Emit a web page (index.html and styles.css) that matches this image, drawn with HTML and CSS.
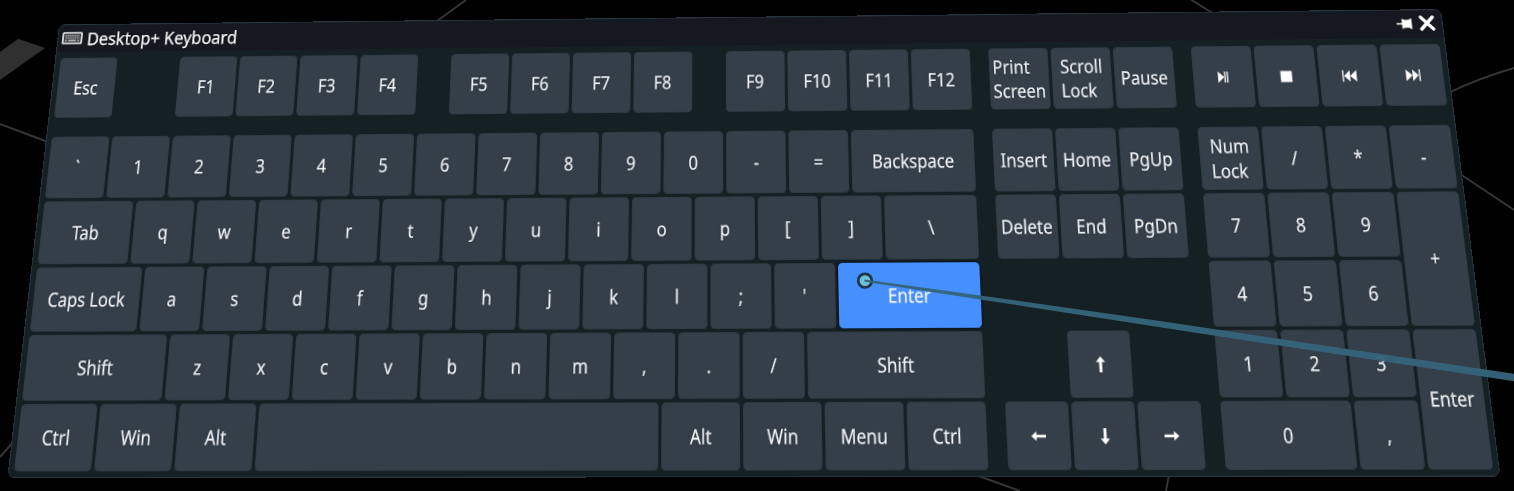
FILE: index.html
```html
<!DOCTYPE html>
<html lang="en">
<head>
<meta charset="utf-8">
<title>Desktop+ Keyboard</title>
<link rel="stylesheet" href="styles.css">
</head>
<body>
<svg class="scene" viewBox="0 0 1514 491" aria-hidden="true">
  <path class="slab" d="M0 52 18 38.7 45 48 0 80Z"/>
  <path class="wire" d="M0 124 48 142M437 21 466 0M0 457 14 441M976 475 1020 491M1170 470 1166 491M1190 -1 1214 14M1450 92Q1480 78 1514 68M1460 174 1514 210"/>
</svg>

<main class="keyboard">
  <header class="titlebar">
    <svg class="title-icon" viewBox="0 0 22 13"><rect x="1" y="1" width="20" height="11" rx=".8" fill="#3a3d40" stroke="#f2f2f2" stroke-width="1.7"/><path d="M3.5 4h15M3.5 6.4h15" stroke="#bbb" stroke-width="1.3" stroke-dasharray="1.3 .7"/><path d="M3.5 9h2M7 9h8M16.500 9h2" stroke="#ccc" stroke-width="1.3"/></svg>
    <h1 class="title">Desktop+ Keyboard</h1>
    <svg class="pin" viewBox="0 0 16 11"><path fill="#fff" d="M0 4.700H5.500V1Q5.500.3 6.200.6L8 1.500H12.500L14.500.3H15.500V10.700H14.500L12.500 9.500H8L6.200 10.400Q5.500 10.700 5.500 10V6.300H0Z"/></svg>
    <svg class="close" viewBox="0 0 16 16"><path d="M2 2 14 14M14 2 2 14" stroke="#fff" stroke-width="3.300" stroke-linecap="round"/></svg>
  </header>

  <div class="clusters">
    <section class="cluster">
      <div class="row function-row">
        <div class="key"><span>Esc</span></div>
        <div class="key after-esc"><span>F1</span></div><div class="key"><span>F2</span></div><div class="key"><span>F3</span></div><div class="key"><span>F4</span></div>
        <div class="key after-group"><span>F5</span></div><div class="key"><span>F6</span></div><div class="key"><span>F7</span></div><div class="key"><span>F8</span></div>
        <div class="key after-group"><span>F9</span></div><div class="key"><span>F10</span></div><div class="key"><span>F11</span></div><div class="key"><span>F12</span></div>
      </div>
      <div class="row">
        <div class="key"><span>`</span></div><div class="key"><span>1</span></div><div class="key"><span>2</span></div><div class="key"><span>3</span></div><div class="key"><span>4</span></div><div class="key"><span>5</span></div><div class="key"><span>6</span></div><div class="key"><span>7</span></div><div class="key"><span>8</span></div><div class="key"><span>9</span></div><div class="key"><span>0</span></div><div class="key"><span>-</span></div><div class="key"><span>=</span></div>
        <div class="key w200"><span>Backspace</span></div>
      </div>
      <div class="row">
        <div class="key w150"><span>Tab</span></div>
        <div class="key"><span>q</span></div><div class="key"><span>w</span></div><div class="key"><span>e</span></div><div class="key"><span>r</span></div><div class="key"><span>t</span></div><div class="key"><span>y</span></div><div class="key"><span>u</span></div><div class="key"><span>i</span></div><div class="key"><span>o</span></div><div class="key"><span>p</span></div><div class="key"><span>[</span></div><div class="key"><span>]</span></div>
        <div class="key w150"><span>\</span></div>
      </div>
      <div class="row">
        <div class="key w175"><span>Caps Lock</span></div>
        <div class="key"><span>a</span></div><div class="key"><span>s</span></div><div class="key"><span>d</span></div><div class="key"><span>f</span></div><div class="key"><span>g</span></div><div class="key"><span>h</span></div><div class="key"><span>j</span></div><div class="key"><span>k</span></div><div class="key"><span>l</span></div><div class="key"><span>;</span></div><div class="key"><span>'</span></div>
        <div class="key w225 hovered"><span>Enter</span></div>
      </div>
      <div class="row">
        <div class="key w225"><span>Shift</span></div>
        <div class="key"><span>z</span></div><div class="key"><span>x</span></div><div class="key"><span>c</span></div><div class="key"><span>v</span></div><div class="key"><span>b</span></div><div class="key"><span>n</span></div><div class="key"><span>m</span></div><div class="key"><span>,</span></div><div class="key"><span>.</span></div><div class="key"><span>/</span></div>
        <div class="key w275"><span>Shift</span></div>
      </div>
      <div class="row">
        <div class="key w125"><span>Ctrl</span></div><div class="key w125"><span>Win</span></div><div class="key w125"><span>Alt</span></div>
        <div class="key w625"></div>
        <div class="key w125"><span>Alt</span></div><div class="key w125"><span>Win</span></div><div class="key w125"><span>Menu</span></div><div class="key w125"><span>Ctrl</span></div>
      </div>
    </section>

    <section class="cluster">
      <div class="row function-row">
        <div class="key"><span>Print<br>Screen</span></div><div class="key"><span>Scroll<br>Lock</span></div><div class="key"><span>Pause</span></div>
      </div>
      <div class="pad">
        <div class="key"><span>Insert</span></div><div class="key"><span>Home</span></div><div class="key"><span>PgUp</span></div>
        <div class="key"><span>Delete</span></div><div class="key"><span>End</span></div><div class="key"><span>PgDn</span></div>
        <div class="key arrow-up"><svg class="icon" viewBox="0 0 16 16"><path d="M8 .5 12.500 5.800H9.400V15H6.600V5.800H3.500Z"/></svg></div>
        <div class="key arrow-left"><svg class="icon" viewBox="0 0 16 16"><path d="M.8 8 5.800 3.700V6.700H15V9.300H5.800V12.300Z"/></svg></div>
        <div class="key arrow-down"><svg class="icon" viewBox="0 0 16 16"><path d="M8 15.500 3.500 10.200H6.600V1H9.400V10.200H12.500Z"/></svg></div>
        <div class="key arrow-right"><svg class="icon" viewBox="0 0 16 16"><path d="M15.200 8 10.200 12.300V9.300H1V6.700H10.200V3.700Z"/></svg></div>
      </div>
    </section>

    <section class="cluster">
      <div class="row function-row">
        <div class="key"><svg class="icon" viewBox="0 0 16 16"><path d="M2.200 2.200 8.400 8 2.200 13.800ZM8.600 2.500H9.900V13.500H8.600ZM11.100 2.500H12.400V13.500H11.100Z"/></svg></div>
        <div class="key"><svg class="icon" viewBox="0 0 16 16"><path d="M1.700 2.500H13.300V13.500H1.700Z"/></svg></div>
        <div class="key"><svg class="icon" viewBox="0 0 16 16"><path d="M.2 2.300H1.500V13.700H.2ZM7.900 2.300V13.700L2 8ZM14.600 2.300V13.700L8 8Z"/></svg></div>
        <div class="key"><svg class="icon" viewBox="0 0 16 16"><path d="M14.800 2.300H13.500V13.700H14.800ZM7.100 2.300V13.700L13 8ZM.4 2.300V13.700L7 8Z"/></svg></div>
      </div>
      <div class="pad numpad">
        <div class="key"><span>Num<br>Lock</span></div><div class="key"><span>/</span></div><div class="key"><span>*</span></div><div class="key"><span>-</span></div>
        <div class="key"><span>7</span></div><div class="key"><span>8</span></div><div class="key"><span>9</span></div><div class="key tall"><span>+</span></div>
        <div class="key"><span>4</span></div><div class="key"><span>5</span></div><div class="key"><span>6</span></div>
        <div class="key"><span>1</span></div><div class="key"><span>2</span></div><div class="key"><span>3</span></div><div class="key tall"><span>Enter</span></div>
        <div class="key wide"><span>0</span></div><div class="key"><span>,</span></div>
      </div>
    </section>
  </div>
</main>

<svg class="pointer" viewBox="0 0 1514 491" aria-hidden="true">
  <circle cx="865" cy="280.600" r="6.800" fill="#6cc2da" stroke="#20364d" stroke-width="2.800"/>
  <path class="beam" d="M864.500 279.500 982 295.700 1160 321 1514 373.700V381.300L1160 327.300 982 299.700 864.500 281.700Z"/>
</svg>
</body>
</html>
```
FILE: styles.css
```css
body {
  margin: 0;
  width: 1514px;
  height: 491px;
  overflow: hidden;
  position: relative;
  background: #010102;
  font-family: "Noto Sans", "Open Sans", sans-serif;
}

.scene,
.pointer {
  position: absolute;
  left: 0;
  top: 0;
  width: 1514px;
  height: 491px;
  pointer-events: none;
}

.slab { fill: #303030; }
.wire { fill: none; stroke: #363636; stroke-width: 1.900; }
.beam { fill: #35647a; fill-opacity: .96; }

/* A flat panel, tilted in space. Its origin is the corner of the first key. */
.keyboard {
  position: relative;
  box-sizing: border-box;
  width: 1449px;
  height: 438px;
  padding: 0 5px 5px;
  border: 1px solid #26353d;
  border-radius: 7px;
  background: #152025;
  color: #f6f7f8;
  font-size: 18.500px;
  line-height: 24px;
  -webkit-text-stroke: .250px #f6f7f8;
  transform-origin: 0 0;
  transform:
    matrix3d(
      0.929754, -0.010779, 0, -0.0000206152,
      -0.120244, 0.961655, 0, -0.000168584,
      0, 0, 1, 0,
      60.8, 58.05, 0, 1)
    translate(-6px, -35px);
}

.titlebar {
  display: flex;
  align-items: center;
  height: 28px;
  margin: 0 -5px 6px;
  padding: 0 7px 0 4px;
  border-radius: 6px 6px 0 0;
  background: #15191f;
}

.title-icon { width: 22px; height: 13px; margin: 0 5px 1px 0; }

.title {
  flex: 1;
  margin: 0;
  font-size: 18.500px;
  font-weight: 400;
  line-height: 28px;
  transform: translateY(-.5px) scaleX(.948);
  transform-origin: 0 50%;
  text-shadow: 0 0 2px #000;
}

.pin { width: 16px; height: 11px; margin: 0 7px 2px 0; }
.close { width: 16px; height: 16px; margin-bottom: 2px; }

.clusters { display: flex; gap: 19px; }
.cluster { display: flex; flex-direction: column; gap: 3px; }
.row { display: flex; gap: 3px; }
.function-row { margin-bottom: 16px; }

.key {
  box-sizing: border-box;
  display: flex;
  align-items: center;
  justify-content: center;
  width: 61px;
  height: 61px;
  border: 1px solid #303c45;
  border-radius: 4px;
  background: #343f49;
  white-space: nowrap;
}

.key span { transform: translateY(-.5px) scaleX(.915); text-shadow: 0 0 2px #1a2a3a; }

.w125 { width: 77px; }
.w150 { width: 93px; }
.w175 { width: 109px; }
.w200 { width: 125px; }
.w225 { width: 141px; }
.w275 { width: 173px; }
.w625 { width: 397px; }

.after-esc { margin-left: 64px; }
.after-group { margin-left: 32px; }

.key.hovered {
  border-color: #458fff;
  background: #458fff;
  box-shadow: 0 0 1.500px 1px #08131c;
}

.key.hovered span { text-shadow: none; }

.pad {
  display: grid;
  grid-template-columns: repeat(3, 61px);
  grid-template-rows: repeat(5, 61px);
  gap: 3px;
}

.numpad { grid-template-columns: repeat(4, 61px); }
.arrow-up { grid-area: 4 / 2; }
.arrow-left { grid-area: 5 / 1; }
.arrow-down { grid-area: 5 / 2; }
.arrow-right { grid-area: 5 / 3; }
.tall { grid-row: span 2; height: 125px; }
.wide { grid-column: span 2; width: 125px; }

.icon { width: 16px; height: 16px; fill: #fff; }
```
